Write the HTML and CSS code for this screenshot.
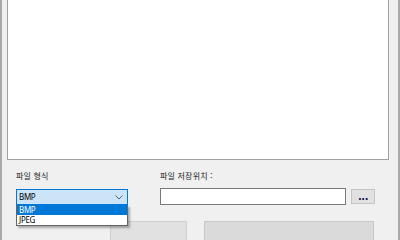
FILE: index.html
```html
<!DOCTYPE html>
<html lang="ko">
<head>
<meta charset="utf-8">
<link rel="stylesheet" href="styles.css">
</head>
<body>
<div class="window">
  <div class="panel"></div>
  <div class="controls">
    <div class="group format">
      <div class="label">파일 형식</div>
      <div class="combo">
        <span class="combo-text">BMP</span>
        <svg class="chev" width="8" height="5" viewBox="0 0 8 5"><polyline points="0.5,0.5 4,4 7.5,0.5" fill="none" stroke="#606060" stroke-width="1"/></svg>
      </div>
    </div>
    <div class="group path">
      <div class="label">파일 저장위치 :</div>
      <div class="path-row">
        <div class="input"></div>
        <div class="browse"><span class="dots">...</span></div>
      </div>
    </div>
  </div>
  <div class="buttons">
    <div class="btn btn1"></div>
    <div class="btn btn2"></div>
  </div>
  <div class="dropdown">
    <div class="opt sel">BMP</div>
    <div class="opt">JPEG</div>
  </div>
</div>
</body>
</html>
```
FILE: styles.css
```css
html, body {
  margin: 0;
  padding: 0;
  background: #f0f0f0;
  overflow: hidden;
}
.window {
  position: relative;
  width: 100vw;
  height: 100vh;
  box-sizing: border-box;
  background: #f0f0f0;
  border-left: 2px solid #a9a9a9;
  border-right: 2px solid #a9a9a9;
  overflow: hidden;
  display: flex;
  flex-direction: column;
  font-family: "Noto Sans", "Noto Sans CJK KR", sans-serif;
  font-size: 8px;
  color: #000;
}
.panel {
  margin-left: 5px;
  width: 382px;
  height: 160px;
  box-sizing: border-box;
  background: #fff;
  border: 1px solid #a0a0a0;
  border-top: none;
  flex: none;
}
.controls {
  display: flex;
  padding-left: 14px;
  margin-top: 11px;
  gap: 32px;
  flex: none;
}
.group {
  display: flex;
  flex-direction: column;
}
.label {
  font-family: "Noto Sans CJK KR", sans-serif;
  font-size: 8px;
  line-height: 10px;
  height: 10px;
  color: #222;
  letter-spacing: 0.2px;
}
.combo {
  margin-top: 8px;
  width: 112px;
  height: 16px;
  box-sizing: border-box;
  background: #cce4f7;
  border: 1px solid #0078d7;
  display: flex;
  align-items: center;
  justify-content: space-between;
  padding: 0 3px 0 2px;
}
.combo-text {
  font-family: "Noto Sans", sans-serif;
  font-size: 8px;
  line-height: 10px;
  letter-spacing: -0.3px;
}
.chev {
  margin-right: 1px;
  margin-top: 1px;
}
.path-row {
  margin-top: 7px;
  display: flex;
  align-items: center;
  gap: 5px;
}
.input {
  width: 186px;
  height: 17px;
  box-sizing: border-box;
  background: #fff;
  border: 1px solid #7a7a7a;
}
.browse {
  width: 24px;
  height: 15px;
  box-sizing: border-box;
  background: #e1e1e1;
  border: 1px solid #c4c4c4;
  display: flex;
  align-items: flex-end;
  justify-content: center;
  padding-bottom: 3px;
}
.dots {
  font-family: "DejaVu Sans", sans-serif;
  font-weight: bold;
  font-size: 10px;
  line-height: 6px;
  height: 6px;
  color: #1a1a50;
  letter-spacing: -0.5px;
}
.buttons {
  display: flex;
  margin-top: 16px;
  padding-left: 108px;
  gap: 17px;
  flex: none;
}
.btn {
  height: 20px;
  box-sizing: border-box;
  background: #e1e1e1;
  border: 1px solid #cfcfcf;
}
.btn1 {
  width: 77px;
}
.btn2 {
  width: 170px;
  background: #dadada;
  border-color: #c8c8c8;
}
.dropdown {
  position: absolute;
  left: 14px;
  top: 205px;
  width: 112px;
  box-sizing: border-box;
  background: #fff;
  border: 1px solid #646464;
  border-top: none;
  box-shadow: 2px 2px 2px rgba(0, 0, 0, 0.3);
  font-family: "Noto Sans", sans-serif;
  font-size: 8px;
}
.opt {
  height: 10px;
  line-height: 10px;
  padding-left: 2px;
  letter-spacing: -0.3px;
}
.opt.sel {
  background: #0078d7;
  color: #fff;
}
```
